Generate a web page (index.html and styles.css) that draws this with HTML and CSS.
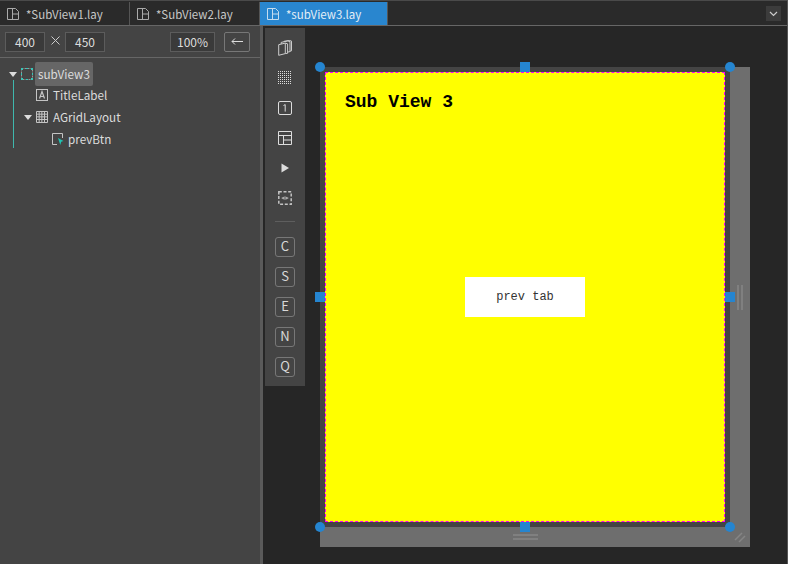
FILE: index.html
```html
<!DOCTYPE html>
<html lang="en">
<head>
  <meta charset="UTF-8" />
  <title>subView3.lay</title>
  <link rel="stylesheet" href="styles.css">
</head>
<body>
  <div class="app">
    <div class="tabs">
      <div class="tab">
        <svg class="tab-icon" viewBox="0 0 12 12"><path d="M.5.5h8l3 3v8H.5zM5.5.5v11M5.5 6h6"/></svg>
        <span>*SubView1.lay</span>
      </div>
      <div class="tab">
        <svg class="tab-icon" viewBox="0 0 12 12"><path d="M.5.5h8l3 3v8H.5zM5.5.5v11M5.5 6h6"/></svg>
        <span>*SubView2.lay</span>
      </div>
      <div class="tab active">
        <svg class="tab-icon" viewBox="0 0 12 12"><path d="M.5.5h8l3 3v8H.5zM5.5.5v11M5.5 6h6"/></svg>
        <span>*subView3.lay</span>
      </div>
      <div class="tab-menu">
        <svg viewBox="0 0 9 6" width="9" height="6"><path d="M1 1l3.5 3.5L8 1"/></svg>
      </div>
    </div>

    <div class="main">
      <div class="side">
        <div class="size-bar">
          <div class="field w40">400</div>
          <svg class="times" viewBox="0 0 9 9"><path d="M.5.5l8 8M8.500.5l-8 8"/></svg>
          <div class="field w40">450</div>
          <div class="field zoom">100%</div>
          <button class="back"><svg viewBox="0 0 12 7" width="12" height="7"><path d="M12 3.500H1M4 .5l-3 3 3 3"/></svg></button>
        </div>
        <div class="tree">
          <div class="tree-line"></div>
          <div class="row root">
            <span class="arrow"></span>
            <svg class="node-icon" viewBox="0 0 12 12"><rect x=".5" y=".5" width="11" height="11" class="dash"/><path class="corner" d="M0 0h2v2H0zM10 0h2v2h-2zM0 10h2v2H0zM10 10h2v2h-2zM5 0h2v1H5zM5 11h2v1H5zM0 5h1v2H0zM11 5h1v2h-1z"/></svg>
            <span class="label selected">subView3</span>
          </div>
          <div class="row lvl1">
            <svg class="node-icon" viewBox="0 0 12 12"><rect x=".5" y=".5" width="11" height="11" class="line"/><path class="line glyph" d="M3.500 9.500L6 2.500l2.500 7M4.300 7.500h3.400"/></svg>
            <span class="label">TitleLabel</span>
          </div>
          <div class="row lvl1 has-arrow">
            <span class="arrow"></span>
            <svg class="node-icon" viewBox="0 0 12 12"><path class="line" d="M.5.5h11v11H.5zM3.170.5v11M5.830.5v11M8.500.5v11M.5 3.170h11M.5 5.830h11M.5 8.500h11"/></svg>
            <span class="label">AGridLayout</span>
          </div>
          <div class="row lvl2">
            <svg class="node-icon" viewBox="0 0 12 12"><path class="line" d="M5 11.500H.5V.5h10V5"/><path class="cursor" d="M6 5l5.500 3-2.300.8L8.300 12z"/></svg>
            <span class="label">prevBtn</span>
          </div>
        </div>
      </div>

      <div class="splitter"></div>

      <div class="work">
        <div class="toolbar">
          <div class="tool"><svg viewBox="0 0 14 16"><path d="M.7 4.700l6.600-1.600v10.500L.7 15.300zM7.300 3.100l2.300.7v9.500l-2.300.3M3.200 4V2.400l6.600-1.500 2.200.7v10l-2.400.5M6 2V1.300L11.500.5l2 .6v9.700l-1.500.4"/></svg></div>
          <div class="tool"><svg viewBox="0 0 14 14"><path class="dots" d="M0 .5h14M0 2.500h14M0 4.500h14M0 6.500h14M0 8.500h14M0 10.500h14M0 12.500h14"/></svg></div>
          <div class="tool"><svg viewBox="0 0 14 14"><rect x=".5" y=".5" width="13" height="13" rx="1.500"/><path d="M5.500 4.500L7.200 3.600v7"/></svg></div>
          <div class="tool"><svg viewBox="0 0 14 14"><path d="M.5.500h13v13H.5zM.5 4.500h13M5.500 4.500v9M5.500 9h8"/></svg></div>
          <div class="tool"><svg viewBox="0 0 14 14"><path class="solid" d="M3.500 2.500l7.500 4.500-7.500 4.500z"/></svg></div>
          <div class="tool"><svg viewBox="0 0 14 14"><rect class="dashed" x=".8" y=".8" width="12.400" height="12.400"/><path class="soft" d="M3.200 7Q7 3.800 10.800 7 7 10.200 3.200 7z"/><circle class="hole" cx="7" cy="7" r=".7"/></svg></div>
          <div class="tool-sep"></div>
          <button class="key">C</button>
          <button class="key">S</button>
          <button class="key">E</button>
          <button class="key">N</button>
          <button class="key">Q</button>
        </div>

        <div class="stage">
          <div class="frame">
            <div class="view">
              <div class="title">Sub View 3</div>
              <button class="prev">prev tab</button>
            </div>
            <span class="dot tl"></span>
            <span class="dot tr"></span>
            <span class="dot bl"></span>
            <span class="dot br"></span>
            <span class="sq tc"></span>
            <span class="sq ml"></span>
            <span class="sq mr"></span>
            <span class="sq bc"></span>
          </div>
          <span class="grip-v"></span>
          <span class="grip-h"></span>
          <svg class="grip-c" viewBox="0 0 12 12"><path d="M1 9l7-7M5 11l6-6"/></svg>
        </div>
      </div>
    </div>
  </div>
</body>
</html>
```

FILE: styles.css
```css
* { margin: 0; padding: 0; box-sizing: border-box; }
body { overflow: hidden; background: #262626; font-family: "Noto Sans CJK KR", "Noto Sans", sans-serif; font-size: 12px; color: #d4d4d4; }
button { font-family: inherit; color: inherit; background: none; }

.app {
  display: flex;
  flex-direction: column;
  width: 788px;
  height: 564px;
  border-right: 1px solid #555;
}

/* tabs */
.tabs {
  display: flex;
  flex: none;
  height: 26px;
  padding-top: 1px;
  background: #2a2a2a;
  border-top: 1px solid #4a4a4a;
  border-bottom: 1px solid #666;
}
.tab {
  display: flex;
  align-items: center;
  gap: 7px;
  width: 130px;
  padding: 1px 0 0 7px;
  border-right: 1px solid #555;
  font-size: 11.5px;
  color: #c8c8c8;
}
.tab.active {
  width: 128px;
  background: #2986cf;
  color: #e4eef6;
  border-right: 1px solid #555;
}
.tab-icon { width: 12px; height: 12px; fill: none; stroke: #aaa; }
.tab.active .tab-icon { stroke: #c5dcef; }
.tab-menu {
  display: flex;
  align-items: center;
  justify-content: center;
  width: 15px;
  height: 15px;
  margin: 4px 6px 0 auto;
  background: #3c3c3c;
}
.tab-menu path { fill: none; stroke: #ccc; stroke-width: 1.2; }

.main { display: flex; flex: 1; min-height: 0; }

/* left panel */
.side { flex: none; width: 260px; background: #444; }
.size-bar {
  display: flex;
  align-items: center;
  height: 32px;
  padding: 0 10px 0 5px;
  border-bottom: 1px solid #666;
}
.field {
  height: 20px;
  line-height: 18px;
  text-align: center;
  background: #3a3a3a;
  border: 1px solid #5c5c5c;
  color: #ddd;
}
.w40 { width: 40px; }
.times {
  width: 9px;
  height: 9px;
  margin: -3px 5px 0 6px;
  fill: none;
  stroke: #ccc;
}
.zoom { width: 45px; margin-left: 65px; }
.back {
  display: flex;
  align-items: center;
  justify-content: center;
  width: 26px;
  height: 20px;
  margin-left: 9px;
  border: 1px solid #777;
  border-radius: 2px;
}
.back path { fill: none; stroke: #ddd; }

.tree { position: relative; padding-top: 4px; font-size: 11.7px; }
.tree-line {
  position: absolute;
  left: 13px;
  top: 22px;
  width: 1px;
  height: 68px;
  background: #3fb8ad;
}
.row { display: flex; align-items: center; height: 22px; }
.root { height: 24px; padding-left: 9px; margin-bottom: -2px; }
.lvl1 { padding-left: 36px; }
.has-arrow { padding-left: 24px; }
.lvl2 { padding-left: 52px; }
.lvl1 .label, .lvl2 .label { margin-top: -2px; }
.arrow {
  width: 0;
  height: 0;
  margin-right: 4px;
  border-left: 4px solid transparent;
  border-right: 4px solid transparent;
  border-top: 5px solid #ddd;
}
.node-icon { flex: none; width: 12px; height: 12px; margin-right: 5px; fill: none; }
.root .node-icon { margin-right: 2px; }
.lvl2 .node-icon { margin-right: 4px; }
.node-icon .line { fill: none; stroke: #c4c4c4; }
.node-icon .glyph { stroke-width: 1.2; }
.node-icon .dash { stroke: #999; stroke-dasharray: 2 1; }
.node-icon .corner { fill: #35c6b8; }
.node-icon .cursor { fill: #1fc4b4; }
.label { color: #dcdcdc; }
.selected {
  height: 24px;
  line-height: 24px;
  padding: 0 3px;
  background: #666;
  border-radius: 2px;
}

.splitter {
  flex: none;
  width: 3px;
  background: #5a5a5a;
}

/* canvas area */
.work { display: flex; flex: 1; align-items: flex-start; background: #262626; }
.toolbar {
  display: flex;
  flex: none;
  flex-direction: column;
  align-items: center;
  width: 40px;
  height: 358px;
  margin: 2px 0 0 2px;
  padding-top: 5px;
  background: #444;
}
.tool { display: flex; flex: none; align-items: center; justify-content: center; width: 30px; height: 30px; }
.tool svg { width: 14px; height: 14px; fill: none; stroke: #ddd; }
.tool:first-child svg { height: 16px; stroke: #ccc; }
.tool .dots { stroke-dasharray: 1 1; }
.tool .solid { fill: #ddd; stroke: none; }
.tool .soft { fill: #aaa; stroke: none; }
.tool .hole { fill: #444; stroke: none; }
.tool .dashed { stroke: #c4c4c4; stroke-width: 1.5; stroke-dasharray: 3 1.7; }
.tool-sep { flex: none; width: 20px; height: 1px; margin: 8px 0 15px; background: #5e5e5e; }
.key {
  flex: none;
  width: 20px;
  height: 20px;
  margin-bottom: 10px;
  padding-bottom: 2px;
  border: 1px solid #777;
  border-radius: 3px;
  font-size: 13px;
  line-height: 16px;
  color: #d8d8d8;
}

.stage {
  position: relative;
  flex: none;
  width: 430px;
  height: 480px;
  margin: 41px 0 0 15px;
  background: #6e6e6e;
}
.frame {
  position: relative;
  width: 410px;
  height: 460px;
  padding: 5px;
  background: #444;
}
.view {
  position: relative;
  display: flex;
  align-items: center;
  justify-content: center;
  width: 400px;
  height: 450px;
  background: #ff0;
  border: 1px dashed #f0f;
}
.title {
  position: absolute;
  left: 19px;
  top: 19px;
  font-family: "Liberation Mono", monospace;
  font-size: 18px;
  font-weight: bold;
  color: #000;
}
.prev {
  width: 120px;
  height: 40px;
  background: #fff;
  border: none;
  font-family: "Liberation Mono", monospace;
  font-size: 12px;
  color: #333;
}

/* handles sit over the frame edges */
.dot, .sq {
  position: absolute;
  width: 10px;
  height: 10px;
  margin: -5px 0 0 -5px;
  background: #2585d0;
}
.dot { border-radius: 50%; }
.tl { left: 0; top: 0; }
.tr { left: 100%; top: 0; }
.bl { left: 0; top: 100%; }
.br { left: 100%; top: 100%; }
.tc { left: 50%; top: 0; }
.ml { left: 0; top: 50%; }
.mr { left: 100%; top: 50%; }
.bc { left: 50%; top: 100%; }

.grip-v {
  position: absolute;
  left: 417px;
  top: 218px;
  width: 6px;
  height: 25px;
  border-left: 2px solid #808080;
  border-right: 2px solid #808080;
}
.grip-h {
  position: absolute;
  left: 193px;
  top: 467px;
  width: 25px;
  height: 6px;
  border-top: 2px solid #808080;
  border-bottom: 2px solid #808080;
}
.grip-c {
  position: absolute;
  left: 414px;
  top: 464px;
  width: 12px;
  height: 12px;
  fill: none;
  stroke: #858585;
  stroke-width: 1.5;
}
```
